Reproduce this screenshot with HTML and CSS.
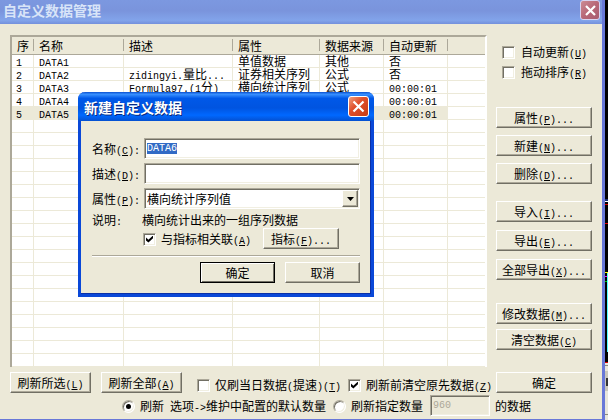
FILE: index.html
```html
<!DOCTYPE html>
<html lang="zh-CN">
<head>
    <meta charset="UTF-8">
    <meta name="viewport" content="width=device-width, initial-scale=1.0">
    <title>自定义数据管理</title>
    <link rel="stylesheet" href="styles.css">
</head>
<body>
    <div class="window">
        <div class="titlebar">
            <h1>自定义数据管理</h1>
            <button type="button" class="close inactive" aria-label="关闭"><svg width="11" height="11" viewBox="0 0 11 11"><path d="M1 1L10 10M10 1L1 10" stroke="#fff" stroke-width="2.2"/></svg></button>
        </div>
        <div class="main">
            <div class="list">
                <table>
                    <colgroup>
                        <col class="c-num"><col class="c-name"><col class="c-desc"><col class="c-attr"><col class="c-src"><col class="c-auto"><col>
                    </colgroup>
                    <thead>
                        <tr><th>序</th><th>名称</th><th>描述</th><th>属性</th><th>数据来源</th><th>自动更新</th><th></th></tr>
                    </thead>
                    <tbody id="filas">
                        <tr><td><span class="en">1</span></td><td><span class="en">DATA1</span></td><td></td><td>单值数据</td><td>其他</td><td>否</td><td></td></tr>
                        <tr><td><span class="en">2</span></td><td><span class="en">DATA2</span></td><td><span class="en">zidingyi.</span>量比<span class="en">...</span></td><td>证券相关序列</td><td>公式</td><td>否</td><td></td></tr>
                        <tr><td><span class="en">3</span></td><td><span class="en">DATA3</span></td><td><span class="en">Formula97.(1</span>分<span class="en">)</span></td><td>横向统计序列</td><td>公式</td><td><span class="en">00:00:01</span></td><td></td></tr>
                        <tr><td><span class="en">4</span></td><td><span class="en">DATA4</span></td><td></td><td></td><td></td><td><span class="en">00:00:01</span></td><td></td></tr>
                        <tr class="selected"><td><span class="en">5</span></td><td><span class="en">DATA5</span></td><td></td><td></td><td></td><td><span class="en">00:00:01</span></td><td></td></tr>
                    </tbody>
                </table>
            </div>
            <div class="side">
                <div class="checks">
                    <label><input type="checkbox">自动更新<span class="en">(<u>U</u>)</span></label>
                    <label><input type="checkbox">拖动排序<span class="en">(<u>R</u>)</span></label>
                </div>
                <div class="group edit">
                    <button type="button">属性<span class="en">(<u>P</u>)...</span></button>
                    <button type="button">新建<span class="en">(<u>N</u>)...</span></button>
                    <button type="button">删除<span class="en">(<u>D</u>)...</span></button>
                </div>
                <div class="group transfer">
                    <button type="button">导入<span class="en">(<u>I</u>)...</span></button>
                    <button type="button">导出<span class="en">(<u>E</u>)...</span></button>
                    <button type="button">全部导出<span class="en">(<u>X</u>)...</span></button>
                </div>
                <div class="group data">
                    <button type="button">修改数据<span class="en">(<u>M</u>)...</span></button>
                    <button type="button">清空数据<span class="en">(<u>C</u>)</span></button>
                </div>
            </div>
        </div>
        <div class="footer">
            <button type="button" class="refresh">刷新所选<span class="en">(<u>L</u>)</span></button>
            <button type="button" class="refresh">刷新全部<span class="en">(<u>A</u>)</span></button>
            <label class="today"><input type="checkbox">仅刷当日数据<span class="en">(</span>提速<span class="en">)(<u>T</u>)</span></label>
            <label class="clear"><input type="checkbox" checked>刷新前清空原先数据<span class="en">(<u>Z</u>)</span></label>
            <button type="button" class="ok">确定</button>
        </div>
        <div class="range">
            <label><input type="radio" name="range" checked>刷新<span class="en">&nbsp;</span>选项<span class="en">-&gt;</span>维护中配置的默认数量</label>
            <label><input type="radio" name="range">刷新指定数量</label>
            <input type="text" class="amount" value="960" aria-label="数量" disabled>
            <span class="unit">的数据</span>
        </div>
    </div>

    <!-- chart behind the window -->
    <svg class="chart" width="3" viewBox="0 0 3 420" preserveAspectRatio="none">
        <rect width="3" height="420" fill="#000"/>
        <rect y="199" width="3" height="2" fill="#1a2a70"/>
        <rect y="201" width="3" height="1" fill="#fff"/>
        <rect y="204" width="3" height="1" fill="#e00000"/>
        <rect y="223" width="3" height="1" fill="#e00000"/>
        <rect y="272" width="3" height="1" fill="#ff0"/>
        <rect y="276" width="3" height="1" fill="#f0f"/>
        <rect y="281" width="3" height="1" fill="#0c0"/>
        <rect x="2" y="273" width="1" height="79" fill="#5ff"/>
        <rect y="362" width="3" height="1" fill="#e00000"/>
        <rect y="363" width="3" height="57" fill="#e8e6dc"/>
        <rect y="371" width="3" height="20" fill="#c8c6bc"/>
        <rect y="365" width="3" height="1" fill="#8a887c"/>
        <rect x="1" y="378" width="2" height="8" fill="#333"/>
        <rect y="414" width="3" height="1" fill="#8a887c"/>
    </svg>

    <form class="dialog" role="dialog" aria-labelledby="dlgTitle">
        <div class="titlebar">
            <h2 id="dlgTitle">新建自定义数据</h2>
            <button type="button" class="close" aria-label="关闭"><svg width="13" height="13" viewBox="0 0 13 13"><path d="M1.5 1.5L11.5 11.5M11.5 1.5L1.5 11.5" stroke="#fff" stroke-width="2.2"/></svg></button>
        </div>
        <div class="fields">
            <label for="nombre">名称<span class="en">(<u>C</u>):</span></label>
            <input type="text" id="nombre" value="DATA6">
            <label for="desc">描述<span class="en">(<u>D</u>):</span></label>
            <input type="text" id="desc">
            <label for="attr">属性<span class="en">(<u>P</u>):</span></label>
            <div class="combo">
                <select id="attr">
                    <option>横向统计序列值</option>
                </select>
                <span class="arrow"><svg width="7" height="4" viewBox="0 0 7 4"><path d="M0 0H7L3.5 4Z"/></svg></span>
            </div>
        </div>
        <div class="explain"><span>说明<span class="en">:</span></span><span>横向统计出来的一组序列数据</span></div>
        <div class="link">
            <label><input type="checkbox" checked>与指标相关联<span class="en">(<u>A</u>)</span></label>
            <button type="button">指标<span class="en">(<u>F</u>)...</span></button>
        </div>
        <hr>
        <div class="actions">
            <button type="button" class="default">确定</button>
            <button type="button">取消</button>
        </div>
    </form>

    <script src="script.js"></script>
</body>
</html>
```
FILE: styles.css
```css
* {
    box-sizing: border-box;
}
body {
    margin: 0;
    min-height: 100vh;
    display: flex;
    background-color: #000;
    color: #000;
    font-family: "Noto Sans CJK SC", sans-serif;
    font-size: 12px;
    line-height: 16px;
    white-space: nowrap;
}
/* half-width characters */
.en {
    font-family: "Liberation Mono", monospace;
    font-size: 10px;
    line-height: 0;
}
.window {
    flex: 1;
    min-width: 0;
    background-color: #ece9d8;
    border-right: 3px solid #6878d8;
    border-bottom: 1px solid #6878d8;
}
.chart {
    flex: none;
    align-self: stretch;
}

/* title bars */
.titlebar {
    display: flex;
    align-items: center;
    justify-content: space-between;
}
.titlebar h1,
.titlebar h2 {
    margin: 0;
    font-size: 14px;
    line-height: 20px;
}
.window > .titlebar {
    height: 24px;
    padding: 0 2px 4px 3px;
    background: linear-gradient(#7c98e0, #7a94dc 45%, #82a4ea 85%, #7490dc);
}
.titlebar h1 {
    color: #d8e4f8;
}
.close {
    display: flex;
    align-items: center;
    justify-content: center;
    width: 21px;
    height: 21px;
    padding: 0;
    border: 1px solid #fff;
    border-radius: 3px;
    background: linear-gradient(135deg, #f0a080, #e0502c 40%, #c83c14);
}
.close.inactive {
    width: 20px;
    height: 20px;
    border-color: #d8d4f0;
    background: linear-gradient(135deg, #cc8c94, #b86878 50%, #a85c70);
}

/* buttons and boxes */
.side button,
.footer button,
.link button,
.actions button {
    height: 21px;
    padding: 0;
    border: 1px solid;
    border-color: #fff #716f64 #716f64 #fff;
    box-shadow: inset -1px -1px #aca899;
    background-color: #ece9d8;
    color: #000;
    font-family: inherit;
    font-size: 12px;
    line-height: 16px;
}
input[type="text"],
.combo {
    height: 21px;
    padding: 0 1px;
    border: 1px solid;
    border-color: #aca899 #fff #fff #aca899;
    border-radius: 0;
    box-shadow: inset 1px 1px #716f64, inset -1px -1px #f1efe2;
    background-color: #fff;
    outline: none;
}
input[type="text"] {
    padding: 0 2px;
    font-family: "Liberation Mono", monospace;
    font-size: 10px;
}
input::selection {
    background-color: #316ac5;
    color: #fff;
}
label {
    display: block;
}
input[type="checkbox"],
input[type="radio"] {
    appearance: none;
    width: 13px;
    height: 13px;
    margin: 0 5px 0 0;
    border: 1px solid;
    border-color: #aca899 #fff #fff #aca899;
    box-shadow: inset 1px 1px #716f64, inset -1px -1px #f1efe2;
    background-color: #fff;
    vertical-align: -2px;
}
input[type="checkbox"]:checked::after {
    content: "";
    display: block;
    width: 7px;
    height: 7px;
    margin: 2px;
    background-color: #000;
    clip-path: polygon(0 30%, 35% 60%, 100% 0, 100% 40%, 35% 100%, 0 70%);
}
input[type="radio"] {
    border-radius: 50%;
}
input[type="radio"]:checked::after {
    content: "";
    display: block;
    width: 5px;
    height: 5px;
    margin: 3px;
    border-radius: 50%;
    background-color: #000;
}

/* list */
.main {
    display: flex;
    gap: 9px;
    padding: 11px 10px 0;
}
.list {
    flex: 1;
    min-width: 0;
    border: 2px solid;
    border-color: #aca899 #fff #fff #aca899;
    border-bottom: 0;
    background-color: #fff;
}
table {
    width: 100%;
    table-layout: fixed;
    border-collapse: separate;
    border-spacing: 0;
}
.c-num {
    width: 22px;
}
.c-name {
    width: 90px;
}
.c-desc {
    width: 109px;
}
.c-attr {
    width: 87px;
}
.c-src,
.c-auto {
    width: 64px;
}
th {
    height: 18px;
    padding: 0 0 0 5px;
    border-bottom: 1px solid #aca899;
    background: linear-gradient(#aca899, #aca899) right 0 top 2px / 1px 12px no-repeat #ece9d8;
    font-weight: normal;
    line-height: 16px;
    text-align: left;
}
th:last-child {
    background: #ece9d8;
}
td {
    height: 13px;
    padding: 0 0 0 5px;
    border-right: 1px solid #ece9d8;
    border-bottom: 1px solid #ece9d8;
    line-height: 12px;
}
td:first-child {
    padding-left: 4px;
}
td:last-child {
    border-right: 0;
}
.selected td:not(:last-child) {
    background-color: #ece9d8;
}

/* right column */
.side {
    flex: none;
    width: 96px;
}
.checks {
    display: grid;
    gap: 4px;
    padding: 9px 0 0 6px;
}
.checks input[type="checkbox"] {
    margin-right: 6px;
}
.group {
    display: grid;
}
.edit {
    gap: 7px;
    margin-top: 27px;
}
.transfer {
    gap: 8px;
    margin-top: 17px;
}
.data {
    gap: 5px;
    margin-top: 23px;
}

/* bottom rows */
.footer {
    display: flex;
    align-items: center;
    padding: 5px 10px 0;
}
.refresh {
    width: 81px;
    margin-right: 10px;
}
.today {
    margin: 4px 0 0 5px;
}
.clear {
    margin: 4px 0 0 auto;
}
.footer .ok {
    width: 96px;
    margin-left: 4px;
}
.range {
    display: flex;
    align-items: center;
    gap: 7px;
    padding: 2px 10px 0 122px;
}
.range .amount {
    width: 60px;
    background-color: #ece9d8;
    color: #aca899;
}
.unit {
    margin-left: -2px;
}

/* new data dialog */
.dialog {
    position: absolute;
    top: 92px;
    left: 78px;
    width: 296px;
    border: 3px solid #0a48d8;
    border-top: 0;
    border-radius: 7px 7px 0 0;
    box-shadow: inset -1px -1px #0a30a8;
    background-color: #ece9d8;
}
.dialog .titlebar {
    height: 29px;
    margin: 0 -3px;
    padding: 0 5px 0 6px;
    border-radius: 7px 7px 0 0;
    background: linear-gradient(#0a50d0, #3890ff 8%, #0058e8 22%, #0054e0 55%, #0068ff 80%, #0450d0);
    color: #fff;
    text-shadow: 1px 1px #0a2a80;
}
.fields {
    display: grid;
    grid-template-columns: 52px 1fr;
    align-items: center;
    row-gap: 4px;
    padding: 17px 11px 0;
}
.fields input {
    width: 100%;
}
.combo {
    display: flex;
    align-items: center;
}
.combo select {
    appearance: none;
    flex: 1;
    padding: 0 1px;
    border: 0;
    background-color: transparent;
    color: #000;
    font-family: inherit;
    font-size: 12px;
    outline: none;
}
.arrow {
    display: flex;
    align-items: center;
    justify-content: center;
    width: 16px;
    height: 17px;
    border: 1px solid;
    border-color: #fff #716f64 #716f64 #fff;
    box-shadow: inset -1px -1px #aca899;
    background-color: #ece9d8;
    pointer-events: none;
}
.explain {
    display: grid;
    grid-template-columns: 50px 1fr;
    padding: 3px 11px 0;
}
.link {
    display: flex;
    align-items: center;
    gap: 12px;
    padding: 0 11px 0 62px;
}
.link button {
    width: 76px;
}
.dialog hr {
    height: 2px;
    margin: 6px 11px 5px;
    border: 0;
    border-top: 1px solid #aca899;
    border-bottom: 1px solid #fff;
}
.actions {
    display: flex;
    justify-content: flex-end;
    gap: 10px;
    padding: 0 11px 11px;
}
.actions button {
    width: 75px;
}
.actions .default {
    border-color: #000;
    box-shadow: inset 1px 1px #fff, inset -1px -1px #716f64;
}
```
FILE: script.js
```javascript
var filas = document.getElementById('filas');

//Empty rows down to the bottom of the list
while (filas.rows.length < 24) {
    var fila = filas.insertRow();
    for (var i = 0; i < 7; i++) {
        fila.insertCell();
    }
}

//The name is ready to be typed over
var nombre = document.getElementById('nombre');
nombre.focus();
nombre.select();
```
